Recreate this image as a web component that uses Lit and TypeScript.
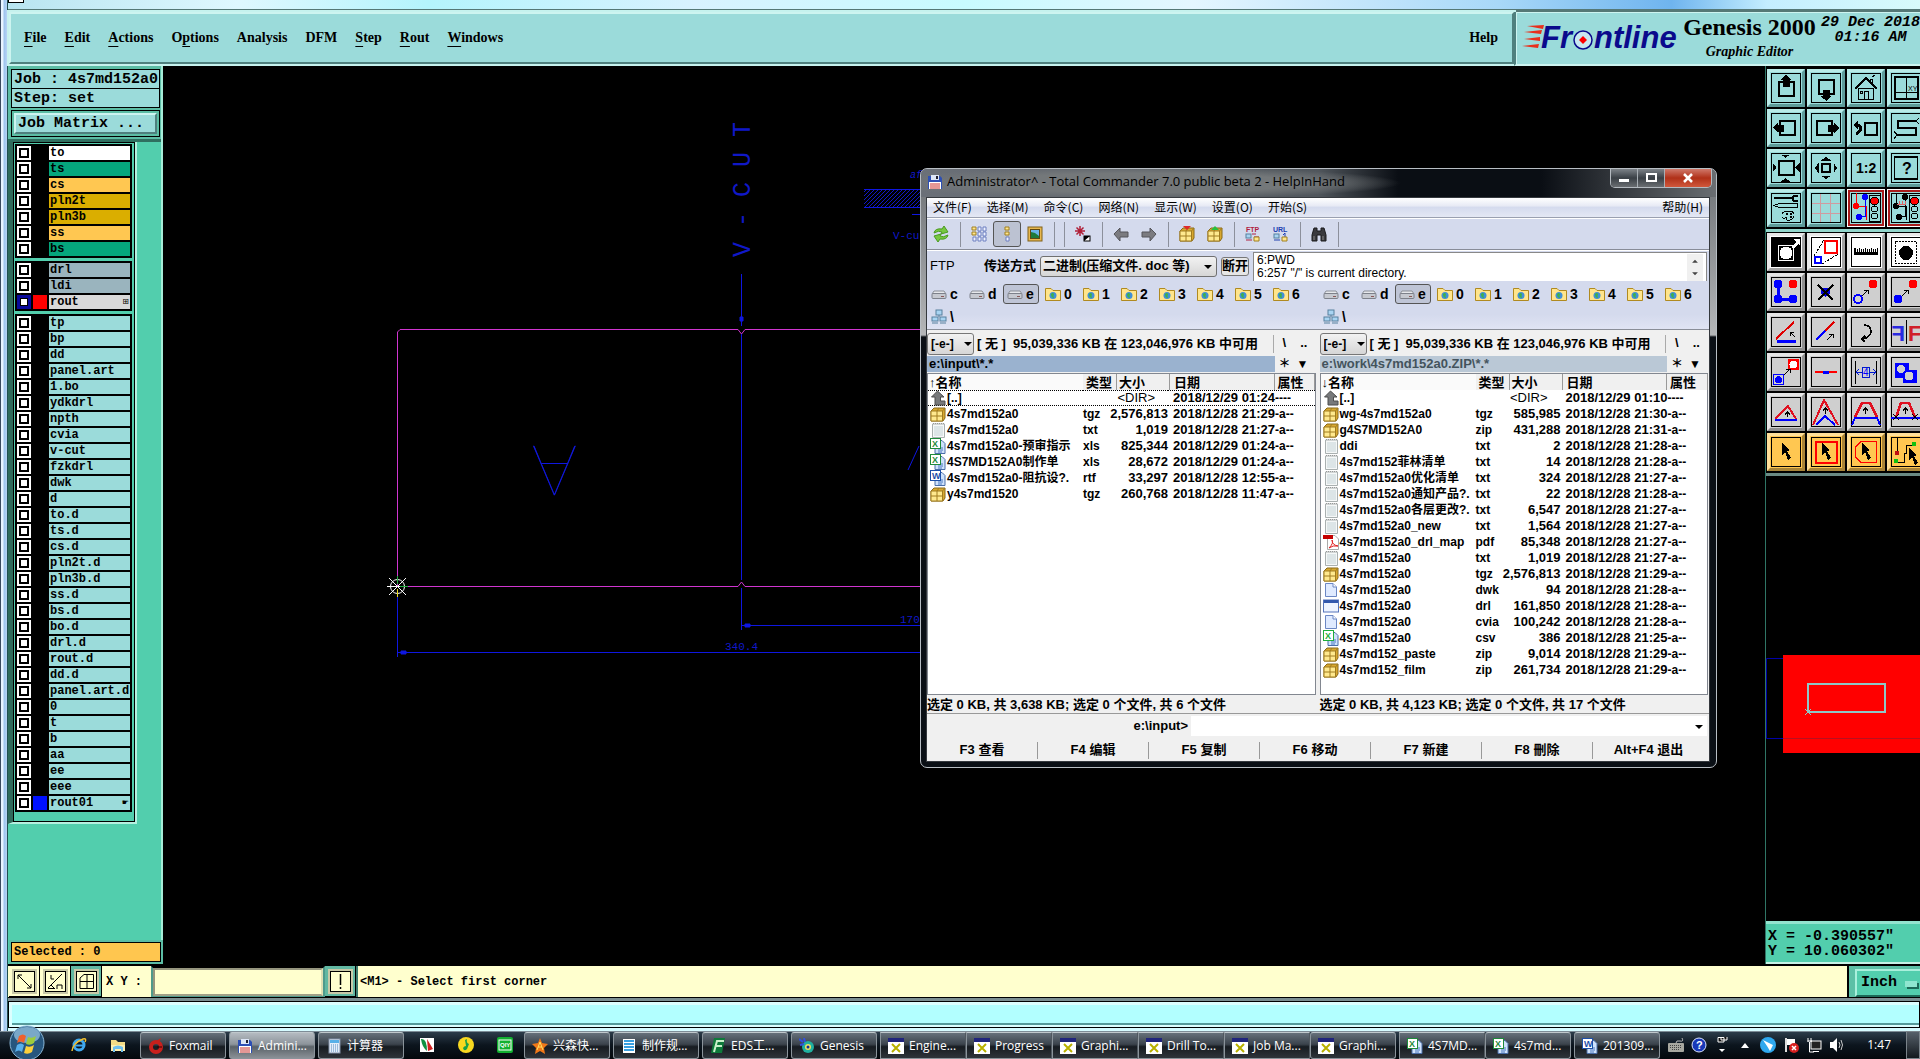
import { LitElement, html, svg, css, TemplateResult, SVGTemplateResult } from "lit";
import { customElement } from "lit/decorators.js";
import { classMap } from "lit/directives/class-map.js";

type Svg = SVGTemplateResult;

/* ---------- data ---------- */

const menus: [string, string, string][] = [
  ["", "F", "ile"], ["", "E", "dit"], ["", "A", "ctions"], ["O", "p", "tions"],
  ["Analysis", "", ""], ["DFM", "", ""], ["", "S", "tep"], ["", "R", "out"], ["", "W", "indows"],
];

interface Layer { name: string; kind: string; swatch?: string; mark?: string; active?: boolean }

const layerGroups: Layer[][] = [
  [
    { name: "to", kind: "white" }, { name: "ts", kind: "green" }, { name: "cs", kind: "amber" },
    { name: "pln2t", kind: "gold" }, { name: "pln3b", kind: "gold" }, { name: "ss", kind: "amber" },
    { name: "bs", kind: "green" },
  ],
  [
    { name: "drl", kind: "slate" }, { name: "ldi", kind: "slate" },
    { name: "rout", kind: "pale", swatch: "red", mark: "⊞", active: true },
  ],
  [
    ..."tp bp dd panel.art 1.bo ydkdrl npth cvia v-cut fzkdrl dwk d to.d ts.d cs.d pln2t.d pln3b.d ss.d bs.d bo.d drl.d rout.d dd.d panel.art.d 0 t b aa ee eee"
      .split(" ").map((name) => ({ name, kind: "aqua" })),
    { name: "rout01", kind: "aqua", swatch: "blue", mark: "☛" },
  ],
];

type Row = [string, string, string, string, string, string];

const leftFiles: Row[] = [
  ["up", "[..]", "", "<DIR>", "2018/12/29 01:24", "----"],
  ["zip", "4s7md152a0", "tgz", "2,576,813", "2018/12/28 21:29", "-a--"],
  ["txt", "4s7md152a0", "txt", "1,019", "2018/12/28 21:27", "-a--"],
  ["xls", "4s7md152a0-预审指示", "xls", "825,344", "2018/12/29 01:24", "-a--"],
  ["xls", "4S7MD152A0制作单", "xls", "28,672", "2018/12/29 01:24", "-a--"],
  ["rtf", "4s7md152a0-阻抗设?.", "rtf", "33,297", "2018/12/28 12:55", "-a--"],
  ["zip", "y4s7md1520", "tgz", "260,768", "2018/12/28 11:47", "-a--"],
];

const rightFiles: Row[] = [
  ["up", "[..]", "", "<DIR>", "2018/12/29 01:10", "----"],
  ["zip", "wg-4s7md152a0", "tgz", "585,985", "2018/12/28 21:30", "-a--"],
  ["zip", "g4S7MD152A0", "zip", "431,288", "2018/12/28 21:31", "-a--"],
  ["txt", "ddi", "txt", "2", "2018/12/28 21:28", "-a--"],
  ["txt", "4s7md152菲林清单", "txt", "14", "2018/12/28 21:28", "-a--"],
  ["txt", "4s7md152a0优化清单", "txt", "324", "2018/12/28 21:27", "-a--"],
  ["txt", "4s7md152a0通知产品?.", "txt", "22", "2018/12/28 21:28", "-a--"],
  ["txt", "4s7md152a0各层更改?.", "txt", "6,547", "2018/12/28 21:27", "-a--"],
  ["txt", "4s7md152a0_new", "txt", "1,564", "2018/12/28 21:27", "-a--"],
  ["pdf", "4s7md152a0_drl_map", "pdf", "85,348", "2018/12/28 21:27", "-a--"],
  ["txt", "4s7md152a0", "txt", "1,019", "2018/12/28 21:27", "-a--"],
  ["zip", "4s7md152a0", "tgz", "2,576,813", "2018/12/28 21:29", "-a--"],
  ["doc", "4s7md152a0", "dwk", "94", "2018/12/28 21:28", "-a--"],
  ["app", "4s7md152a0", "drl", "161,850", "2018/12/28 21:28", "-a--"],
  ["doc", "4s7md152a0", "cvia", "100,242", "2018/12/28 21:28", "-a--"],
  ["csv", "4s7md152a0", "csv", "386", "2018/12/28 21:25", "-a--"],
  ["zip", "4s7md152_paste", "zip", "9,014", "2018/12/28 21:29", "-a--"],
  ["zip", "4s7md152_film", "zip", "261,734", "2018/12/28 21:29", "-a--"],
];

/* ---------- 30x30 editor tool icons ---------- */

const frame = svg`<rect x=".5" y=".5" width="29" height="29" fill="none" stroke="#000"/>`;
const cursor = (x: number, y: number) =>
  svg`<path transform="translate(${x} ${y})" d="M0 0 L8 7 L5 8 L9 15 L6 17 L3 9 L0 12 Z" fill="#000" stroke="none"/>`;
const smallArrow = (x: number, y: number) =>
  svg`<path d="M${x} ${y} l6 -6 m-4 0 h4 v4" fill="none" stroke="#000"/>`;
const lights = (a: string, b: string) => svg`
  <path d="M5 0 V12 M5 13 H15 V27" stroke="${a}" stroke-width="1" fill="none"/>
  <path d="M14 5 V23 H9" stroke="${b}" fill="none"/>
  <circle cx="5" cy="13" r="3" fill="${a}"/><circle cx="14" cy="4" r="3" fill="${b}"/><circle cx="8" cy="24" r="3" fill="${b}"/>
  <rect x="18" y="2" width="11" height="26" fill="none" stroke="#000"/>
  <circle cx="23.500" cy="8" r="4" fill="red" stroke="#000"/>
  <circle cx="23.500" cy="16" r="3" fill="none" stroke="#000"/><circle cx="23.500" cy="23" r="3" fill="none" stroke="#000"/>`;

const viewTools: [string, string, Svg][] = [
  ["Pan up", "", svg`${frame}<rect x="7.500" y="9" width="15" height="14" fill="none" stroke="#000" stroke-width="2"/><path d="M12 14V7H9.500L15 2L20.500 7H18.500V14Z"/>`],
  ["Pan down", "", svg`${frame}<rect x="7.500" y="7" width="15" height="14" fill="none" stroke="#000" stroke-width="2"/><path d="M12 17V23H9.500L15.500 28L21 23H19V17Z"/>`],
  ["Home", "", svg`${frame}<path d="M4 16L15 5L26 16" fill="none" stroke="#000" stroke-width="1.500"/><path d="M7.500 15V26.500H22.500V15ZM13.500 26V18.500H17.500V26M9.500 18.500h2v2h-2zM19.500 10V6.500h2v5M21 4l3-2" fill="none" stroke="#000"/>`],
  ["XY window", "", svg`${frame}<rect x="4" y="4" width="23" height="22" fill="none" stroke="#000" stroke-width="2"/><path d="M15.500 4V26M4 19.500H27" stroke="#000"/><text x="17" y="18" font-size="7">XY</text>`],
  ["Pan left", "", svg`${frame}<rect x="9" y="8" width="15" height="14" fill="none" stroke="#000" stroke-width="2"/><path d="M13 11.500H7V9.500L2 15L7 20V18.500H13Z"/>`],
  ["Pan right", "", svg`${frame}<rect x="6" y="8" width="15" height="14" fill="none" stroke="#000" stroke-width="2"/><path d="M17 11.500H23V9.500L28 15L23 20V18.500H17Z"/>`],
  ["Undo zoom", "", svg`${frame}<rect x="14" y="9.500" width="12" height="12" fill="none" stroke="#000" stroke-width="2"/><path d="M5 12H8Q11 15 8 19L5 21" fill="none" stroke="#000" stroke-width="3"/><path d="M2 12L7 8V16Z"/>`],
  ["Route view", "", svg`${frame}<path d="M25 8H7V15H25V22H6" fill="none" stroke="#000" stroke-width="2"/><path d="M25 8l3-3M25 8l3 3M6 22l-3-4M6 22l-3 4" stroke="#000"/>`],
  ["Zoom out", "", svg`${frame}<rect x="7.500" y="8" width="15" height="14" fill="none" stroke="#000" stroke-width="2"/><path d="M10 1.500H19L14.500 5ZM10 28.500H19L14.500 25ZM1.500 10V19L5.500 14.500ZM28.500 10V19L24.500 14.500Z"/>`],
  ["Zoom in", "", svg`${frame}<rect x="11" y="11" width="8" height="8" fill="none" stroke="#000" stroke-width="2"/><path d="M10 7.500H20L15 4ZM10 22.500H20L15 26ZM7.500 10V20L4 15ZM22.500 10V20L26 15Z"/>`],
  ["Scale 1:2", "", svg`${frame}<text x="5" y="20" font-size="14" font-weight="700">1:2</text>`],
  ["Query", "", svg`${frame}<rect x="3.500" y="4" width="23" height="22" fill="none" stroke="#000" stroke-width="1.500"/><text x="11" y="21" font-size="16" font-weight="700">?</text>`],
  ["Setup", "", svg`${frame}<path d="M3 5H21" stroke="#000" stroke-width="2"/><path d="M27 3H23L21 5L23 8H27" fill="none" stroke="#000" stroke-width="2"/><path d="M3 12.500L8 10.500H26.500V14.500H8Z" fill="none" stroke="#000"/><path d="M11 24q-1-6 6-6q7 0 6 5q-2 5-7 4q0-3-2-2q-2 1-3-1Z" fill="none" stroke="#000"/><circle cx="16" cy="21" r="1"/><circle cx="20" cy="21" r="1"/><circle cx="20" cy="24" r="1"/>`],
  ["Grid", "", svg`${frame}<path d="M9.500 1V29M19.500 1V29M1 10.500H29M1 20.500H29" stroke="#d09aa0"/>`],
  ["Snap to nets", "hot", svg`${frame}${lights("#f00", "#00f")}`],
  ["Snap to pads", "hot", svg`${frame}${lights("#000", "#000")}<path d="M6 11h9M8 8v4M11 8v4M14 8v4" stroke="#d66"/>`],
];

const ring = (cx: number, cy: number, r: number, c: string) => svg`<circle cx="${cx}" cy="${cy}" r="${r}" fill="none" stroke="${c}" stroke-width="2"/>`;
const dot = (cx: number, cy: number, r: number, c: string) => svg`<circle cx="${cx}" cy="${cy}" r="${r}" fill="${c}"/>`;

const editTools: [string, string, Svg][] = [
  ["Mask", "paper", svg`<rect width="30" height="30"/><rect x="7" y="8" width="15" height="15" fill="none" stroke="#fff"/>${dot(15, 16, 6.5, "#fff")}<path d="M20 10L25 5L22 2H29V9L27 7L22 12Z" fill="#fff"/>`],
  ["Magnify", "paper", svg`${frame}<rect x="14" y="4" width="12" height="12" fill="none" stroke="red" stroke-width="2"/><rect x="4" y="20" width="6" height="6" fill="none" stroke="#00f" stroke-width="2"/><path d="M3 19L13 3M11 27L27 17" stroke="#000" stroke-dasharray="2 1"/>`],
  ["Measure", "paper", svg`${frame}<path d="M3 11V18H27V11H26V15H25V12H24V15H23V12H22V15H21V11H20V15H19V12H18V15H17V12H16V15H15V11H14V15H13V12H12V15H11V12H10V15H9V11H8V15H7V12H6V15H5V11Z"/>`],
  ["Select area", "paper", svg`${frame}<rect x="4.500" y="4.500" width="21" height="22" fill="none" stroke="#000" stroke-dasharray="2 1"/>${dot(15, 16, 7, "#000")}`],
  ["Copy net", "", svg`${frame}<path d="M7 7V22H22" fill="none" stroke="#00f" stroke-width="3"/>${dot(7, 7, 4.5, "#00f")}${dot(7, 22, 4.5, "#00f")}${dot(22, 22, 4.5, "#00f")}${dot(22, 7, 4.5, "red")}`],
  ["Delete", "", svg`${frame}${dot(14.5, 15, 4.5, "#00d")}<path d="M7 8L22 23M22 8L7 23" stroke="#000" stroke-width="1.500"/>`],
  ["Move", "", svg`${frame}${dot(22, 7, 4.5, "red")}${ring(7, 22, 4, "#00f")}${smallArrow(11, 19)}`],
  ["Copy", "", svg`${frame}${dot(22, 7, 4.5, "red")}${dot(7, 22, 4.5, "#00f")}${smallArrow(11, 19)}`],
  ["Rotate line", "", svg`${frame}<path d="M5 22L23 5" stroke="#e00000" stroke-width="2"/><path d="M6 24.500H25" stroke="#00f" stroke-width="3"/><path d="M24 20l-5-5m0 4v-4h4" stroke="#000" fill="none"/>`],
  ["Split line", "", svg`${frame}<path d="M5 23L14 14" stroke="#00f" stroke-width="2.500"/><path d="M14 14L23 5" stroke="#e00000" stroke-width="2.500"/>${smallArrow(16, 23)}`],
  ["Rotate", "", svg`${frame}<path d="M13 8Q20 8 20 15Q19 21 11 22M14 19L11 22L14 25" fill="none" stroke="#000" stroke-width="1.500"/>`],
  ["Mirror", "", svg`${frame}<path d="M15.500 3V27" stroke="#000"/><text x="17" y="24" font-size="22" font-weight="700" fill="#d0202a">F</text><text transform="translate(14 24) scale(-1 1)" font-size="22" font-weight="700" fill="#2a2ae0">F</text>`],
  ["Replace", "", svg`${frame}<rect x="17" y="2" width="11" height="11" fill="red"/>${dot(22.5, 7.5, 4, "#fff")}<rect x="2.500" y="17.500" width="10" height="10" fill="none" stroke="#00f"/>${dot(7.5, 22.5, 3.5, "#00f")}${smallArrow(13, 18)}`],
  ["Break", "", svg`${frame}<path d="M4 15H26" stroke="#f00" stroke-width="2.500"/><path d="M12 15H18" stroke="#00f" stroke-width="3"/>`],
  ["Spacing", "", svg`${frame}<path d="M4.500 4V27M25.500 4V27" stroke="#000"/><path d="M5 15.500H11M19 15.500H25M8 12l-3 3l3 3M22 12l3 3l-3 3M11.500 10.500H18.500V20.500H11.500Z" fill="none" stroke="#0018d0"/><text x="12" y="19" font-size="10" fill="#00f">4</text>`],
  ["Merge", "", svg`${frame}<path d="M4 6H18V13H26V26H12V21H4Z" fill="#00f"/>${dot(10, 12, 4, "#cfcfcf")}${dot(18, 19, 4.5, "#cfcfcf")}`],
  ["Triangle", "", svg`${frame}<path d="M4 22L17 9L25 22" fill="none" stroke="#e01020" stroke-width="2"/><path d="M4 22.500H26" stroke="#00f" stroke-width="2"/><path d="M16.500 20V15M14 17.500L16.500 15L19 17.500" fill="none" stroke="#000"/>`],
  ["Peak", "", svg`${frame}<path d="M2 28L13 3L27 28" fill="none" stroke="#e01020" stroke-width="2"/><path d="M5 28L14 19L24 28" fill="none" stroke="#00f" stroke-width="2"/><path d="M14.500 17V11M12 13.500L14.500 11L17 13.500" fill="none" stroke="#000"/>`],
  ["Trapezoid", "", svg`${frame}<path d="M4 20L11 6H19L26 20" fill="none" stroke="#e01020" stroke-width="2.500"/><path d="M1 28L4 20.500H26L29 28" fill="none" stroke="#00f" stroke-width="2"/><path d="M14.500 17V11M12 13.500L14.500 11L17 13.500" fill="none" stroke="#000"/>`],
  ["Trim", "", svg`${frame}<path d="M5 20L10 6H18L24 20" fill="none" stroke="#e01020" stroke-width="2.500"/><path d="M0 20.500H30" stroke="#00f" stroke-width="2"/><path d="M2 17l6 6M8 17l-6 6M21 17l6 6M27 17l-6 6M14.500 17V11M12 13.500L14.500 11L17 13.500" fill="none" stroke="#000"/>`],
  ["Select", "gold", svg`${frame}${cursor(11, 6)}`],
  ["Frame select", "gold", svg`${frame}<rect x="4.500" y="4.500" width="21" height="21" fill="none" stroke="red" stroke-width="2"/>${cursor(11, 6)}`],
  ["Polygon select", "gold", svg`${frame}<path d="M10 4.500H25.500V25.500H10L4.500 20V10Z" fill="none" stroke="red" stroke-width="1.500"/>${cursor(11, 6)}`],
  ["Net select", "gold", svg`${frame}<path d="M6.500 1V16M6 25H13V16H15V8H23" fill="none" stroke="#000"/>${dot(6, 16, 2.5, "#c01010")}${dot(5, 24, 2.5, "#10c010")}${dot(23, 7, 2.5, "#10c010")}${cursor(18, 11)}`],
];

/* ---------- 16x16 icons ---------- */

const box = svg`<path d="M1 5L4 2H15V12L13 15H1Z" fill="#d8a830" stroke="#8a6a18"/><path d="M1 5H12.500V15H1Z" fill="#ffe98e" stroke="#a07c20"/><path d="M7 5V15M1 10H12.500M7 5L9 2M12.500 5L15 2" stroke="#a07c20" fill="none"/>`;
const sheet = (tag: string, c: string) => svg`
  <path d="M5 2.500H12L15 5.500V15.500H5Z" fill="#cfe2fb" stroke="#4a6ea8"/><path d="M8 10H13M8 12H13M8 14H12" stroke="#4a78c0"/>
  <rect x=".5" y=".5" width="10" height="10" fill="#fff" stroke="${c}"/><text x="2" y="9" font-size="9" font-weight="700" fill="${c}">${tag}</text>`;

const icons16: Record<string, Svg> = {
  up: svg`<path d="M7.500 1L14 7H10.500V11H15V15H5V7H1.500Z" fill="#77797b" stroke="#4c4c4c"/>`,
  zip: box,
  txt: svg`<path d="M2.500 2H14.500V15.500H2.500Z" fill="#f6f8f8" stroke="#a9b0b0"/><path d="M4 5H13M4 7H13M4 9H13M4 11H13M4 13H13" stroke="#c3d2d6"/><path d="M3 1.500H14" stroke="#999" stroke-dasharray="1 1"/>`,
  xls: sheet("X", "#1f8a3b"),
  csv: sheet("X", "#1fae3b"),
  rtf: sheet("W", "#1d4fa8"),
  doc: svg`<path d="M2.500 1.500H10L13.500 5V14.500H2.500Z" fill="#dfeaff" stroke="#6b87c4"/><path d="M10 1.500V5H13.500" fill="#fff" stroke="#6b87c4"/>`,
  app: svg`<rect x=".5" y="2" width="15" height="12" fill="#eef4ff" stroke="#5675bb"/><rect x="1" y="2" width="14" height="3" fill="#3359ad"/>`,
  pdf: svg`<path d="M4.500 1.500H12L15.500 5V15.500H4.500Z" fill="#fff" stroke="#aaa"/><rect x="0" y="1" width="10" height="4" fill="#c40000"/><path d="M6 14Q11 9 9 6Q9 11 15 12Q10 11 6 14" fill="none" stroke="#e02020"/>`,
  drive: svg`<path d="M3 5H13L15 8H1Z" fill="#e6e8ec" stroke="#8a8e96"/><rect x="1" y="7.500" width="14" height="5" rx="1" fill="#c6c9d0" stroke="#7d818a"/><path d="M10 10.500h3" stroke="#8a5a5a"/>`,
  folder: svg`<path d="M.5 2.500H6L8 4.500H15.500V14.500H.5Z" fill="#ffe58c" stroke="#b08a20"/><circle cx="8" cy="9.500" r="3.500" fill="#3f8fd8"/><path d="M6 8q2-2 3 0q-1 2 0 4q-3 0-3-4" fill="#3fb04a"/>`,
  net: svg`<rect x="5" y="1" width="6" height="5" fill="#a9d4f2" stroke="#57809e"/><rect x="1" y="8" width="6" height="4" fill="#a9d4f2" stroke="#57809e"/><rect x="9" y="8" width="6" height="4" fill="#a9d4f2" stroke="#57809e"/><path d="M8 6V8M1 14H7M9 14H15" stroke="#57809e"/>`,
  floppy: svg`<path d="M1 2H13L15 4V15H1Z" fill="#2d4fb4"/><rect x="4" y="1" width="8" height="5" fill="#dde6f6"/><rect x="9" y="2" width="2" height="3" fill="#223"/><rect x="2" y="8" width="12" height="7" fill="#fff"/><path d="M3 10H13M3 12H13M3 14H13" stroke="#c8302c"/>`,
  refresh: svg`<path d="M1 7Q2 2 9 3L11 0L15 6L8 8L9 6Q6 4 1 7Z" fill="#77c840" stroke="#4a9a20"/><path d="M15 9Q14 14 7 13L5 16L1 10L8 8L7 10Q10 12 15 9Z" fill="#77c840" stroke="#4a9a20"/>`,
  brief: svg`<path d="M1 1h4v3H1zM1 6h4v3H1z" fill="#ffe58c" stroke="#a08020"/><path d="M7 1h3v4H7zM12 1h3v4h-3zM7 6h3v4H7zM12 6h3v4h-3zM2 11h3v4H2zM7 11h3v4H7zM12 11h3v4h-3z" fill="#eef2ff" stroke="#6d7ec0"/>`,
  full: svg`<path d="M6 1h4v3H6zM6 6h4v3H6z" fill="#ffe58c" stroke="#a08020"/><path d="M7 11h3v4H7z" fill="#eef2ff" stroke="#6d7ec0"/>`,
  picture: svg`<rect x="1" y="1" width="14" height="14" fill="#e8b850" stroke="#806018"/><rect x="3.500" y="3.500" width="9" height="9" fill="#6ab4ea" stroke="#604810"/><path d="M4 12V6L8 7L12 10V12Z" fill="#1d7a3c"/>`,
  select: svg`<path d="M5 0V10M0 5H10M1.500 1.500L8.500 8.500M8.500 1.500L1.500 8.500" stroke="#b02038" stroke-width="1.500"/><rect x="9" y="10" width="6" height="5" fill="#fff" stroke="#000"/><path d="M9 10h6l-6 5Z"/>`,
  back: svg`<path d="M1 8L7 2V6H15V11H7V15Z" fill="#7b7b80" stroke="#55555a"/>`,
  forward: svg`<path d="M15 8L9 2V6H1V11H9V15Z" fill="#7b7b80" stroke="#55555a"/>`,
  pack: svg`${box}<path d="M4 0H12L8 4Z" fill="#e02a2a"/>`,
  unpack: svg`${box}<path d="M4 4H12L8 0Z" fill="#28c040"/>`,
  ftp: svg`<text x="1" y="6" font-size="7" font-weight="700" fill="#b02040">FTP</text><rect x="1" y="8" width="5" height="4" fill="#a9d4f2" stroke="#57809e"/><path d="M1 14H7M7 8h4M9 11h5" stroke="#b02040"/><path d="M9 11h5v4H9z" fill="#ffe58c" stroke="#a08020"/>`,
  url: svg`<text x="0" y="6" font-size="7" font-weight="700" fill="#2040b0">URL</text><rect x="1" y="8" width="5" height="4" fill="#a9d4f2" stroke="#57809e"/><path d="M1 14H7M12 7v4M10 9l2-2" stroke="#2040b0"/><path d="M9 11h5v4H9z" fill="#ffe58c" stroke="#a08020"/>`,
  find: svg`<path d="M3 2H6V5H10V2H13L15 9V15H10V9H6V15H1V9Z" fill="#3a3a3e" stroke="#1a1a1c"/><path d="M3 10V14M12 10V14" stroke="#888"/>`,
  ie: svg`<circle cx="8" cy="8" r="5" fill="none" stroke="#3fa8ee" stroke-width="3"/><path d="M4 8.500H13" stroke="#3fa8ee" stroke-width="2"/><path d="M1 14Q2 6 12 2Q16 1 14 5" fill="none" stroke="#f2c02e" stroke-width="1.500"/>`,
  explorer: svg`<path d="M1 3H6L8 5H15V13H1Z" fill="#f5dc86"/><path d="M1 8H15V14H1Z" fill="#fff0b0"/><path d="M3 15V10Q8 7 13 10V15H11V12H5V15Z" fill="#6fc0ee"/>`,
  fox: svg`<circle cx="8" cy="9" r="5" fill="none" stroke="#c8201c" stroke-width="4"/><path d="M4 6L13 0L11 5Z" fill="#c8201c"/><path d="M9 9h5" stroke="#300"/>`,
  calc: svg`<rect x="3" y="1" width="11" height="14" fill="#e4eefa" stroke="#8090a8"/><rect x="4" y="2" width="9" height="3" fill="#58b0e8"/><path d="M5 7H12M5 9H12M5 11H12M5 13H12" stroke="#58b" stroke-dasharray="1 1"/>`,
  viewer: svg`<path d="M1 1H15V15H1Z" fill="#fff"/><path d="M2 2Q8 1 8 14Q3 10 2 2Z" fill="#109040"/><path d="M8 2L14 12L9 14Z" fill="#d02020"/>`,
  music: svg`<circle cx="8" cy="8" r="8" fill="#f8d820"/><path d="M9 2Q8 6 11 7L9 12Q6 15 5 11Q6 9 8 9L7 3Z" fill="#18a048"/>`,
  iqiyi: svg`<rect width="16" height="16" rx="2" fill="#12b030"/><rect x="2" y="3" width="12" height="10" fill="none" stroke="#fff"/><text x="3" y="10" font-size="6" font-weight="700" fill="#fff">QIY</text>`,
  star: svg`<path d="M8 0L10 5L16 6L12 10L13 16L8 13L3 16L4 10L0 6L6 5Z" fill="#f07818"/><path d="M5 12L8 4L11 12M6 9H10" fill="none" stroke="#ffe060"/>`,
  list: svg`<rect x="2" y="1" width="12" height="14" fill="#fff"/><path d="M3 3H13M3 6H13M3 9H13M3 12H13" stroke="#3aa0e0" stroke-width="2"/>`,
  eds: svg`<path d="M4 0H15L12 15H1Z" fill="#0e7a3a"/><path d="M4 14L7 3H14M6 8H12" fill="none" stroke="#c8f0c8" stroke-width="2"/>`,
  genesis: svg`<circle cx="9" cy="9" r="6" fill="#20b0a0"/><circle cx="9" cy="9" r="3" fill="#f0e060"/><circle cx="9" cy="9" r="1.500" fill="#1030a0"/><path d="M0 1l4 3M5 0l1 4M1 7l4-1" stroke="#3050e0" stroke-width="2"/>`,
  xwin: svg`<rect width="16" height="16" fill="#fff"/><rect width="16" height="4" fill="#20247c"/><path d="M4 6L12 14M12 6L4 14" stroke="#b8b000" stroke-width="2"/>`,
  keyboard: svg`<path d="M8 6Q8 3 12 4T14 1" fill="none" stroke="#bbb"/><rect x="0" y="6" width="16" height="9" rx="1" fill="#a8a8a0"/><path d="M2 8.500H14M2 10.500H14M4 12.500H12" stroke="#444" stroke-dasharray="1 1"/>`,
  help: svg`<circle cx="8" cy="8" r="7" fill="#1838b8" stroke="#dde6ff"/><text x="5" y="12" font-size="11" font-weight="700" fill="#fff">?</text>`,
  restore: svg`<path d="M7 -1.500H13V3H7ZM4 .5H10V5H4Z" fill="#111" stroke="#fff"/><path d="M5 12H11L8 15Z" fill="#fff"/>`,
  tri: svg`<path d="M4 11H12L8 6Z" fill="#fff"/>`,
  bird: svg`<circle cx="8" cy="8" r="8" fill="#2fa8ee"/><path d="M3 3L13 8L10 14L7 9Z" fill="#fff"/>`,
  flag: svg`<path d="M3 1V15" stroke="#ddd" stroke-width="2"/><path d="M4 2H12V8H4Z" fill="#fff"/><circle cx="11" cy="11" r="5" fill="#d82020"/><path d="M9 9l4 4M13 9l-4 4" stroke="#fff" stroke-width="1.500"/>`,
  lan: svg`<rect x="5" y="4" width="10" height="8" fill="#222" stroke="#fff"/><path d="M7 14.500H13M2 1V5M5 1V5M1.500 4H6M3.500 5V15H8" stroke="#fff" fill="none"/>`,
  sound: svg`<path d="M1 5H4L8 1V15L4 11H1Z" fill="#fff"/><path d="M10 5Q12 8 10 11M12 3Q15 8 12 13" fill="none" stroke="#ccc"/>`,
};

const icon = (name: string, cls = "i16") =>
  html`<svg class=${cls} viewBox="0 0 16 16" aria-hidden="true">${icons16[name]}</svg>`;

const tcTools = ["refresh", "|", "brief", "full", "picture", "|", "|", "select", "|", "back", "forward", "|", "pack", "unpack", "|", "ftp", "url", "|", "find", "|"];

/* ---------- root ---------- */

@customElement("app-root")
export class AppRoot extends LitElement {
  static styles = css`
    :host { display: block; --aqua: #9bdbda; --teal: #52cead; --lit: #cdf4f0; --dim: #4f807e; color: #000; }
    * { box-sizing: border-box; }
    button, input, select, textarea { font: inherit; color: inherit; margin: 0; padding: 0; border: 0; border-radius: 0; background: none; }
    select, input { appearance: none; }
    a { color: inherit; text-decoration: none; }
    svg { display: block; flex: none; }
    svg text { font-family: "Liberation Sans", sans-serif; }
    .screen { display: flex; flex-direction: column; min-height: 100vh; background: #000; overflow: hidden; }
    .desk { display: flex; flex: 1; }
    .edge { width: 8px; flex: none; background: linear-gradient(90deg, #3a4a60 0 1px, #e8f4ff 1px 3px, #9cc4ee 4px, #b8d4f4 7px, #1f4f50 7px 8px); }
    .genesis { flex: 1; min-width: 0; display: flex; flex-direction: column; }
    .cap { height: 9px; background: linear-gradient(90deg, #b8e4f0, #dff8ff 12%, #b4f4fc 22%, #d8f2ff 36%, #c8fbff 50%, #e4f6ff 62%, #a8d8f8 78%, #6fb4ee 87%, #c4eeff 92%, #d8fbfb); }
    .cap span { display: block; width: 16px; height: 3px; background: #fff; border: 1px solid #000; border-top: 0; }

    .head { display: flex; height: 57px; border-top: 3px solid #557876; font: 700 14px/18px "Liberation Serif", serif; }
    .menubar { flex: 1; display: flex; align-items: center; gap: 18px; padding: 0 14px 0 13px; background: var(--aqua); border: 2px solid var(--lit); border-right-color: var(--dim); border-bottom-color: var(--dim); margin: 0 0 2px 1px; outline: 2px solid #c6f2ee; outline-offset: 0; }
    .menubar u { text-underline-offset: 4px; }
    .menubar .help { margin-left: auto; }
    .brand { width: 406px; overflow: hidden; display: flex; background: var(--aqua); border-left: 2px solid var(--dim); border-bottom: 2px solid var(--lit); box-shadow: inset 1px 1px var(--lit); padding: 2px 0 0 6px; z-index: 1; white-space: nowrap; }
    .logo { width: 160px; height: 48px; }
    .logo text { font: italic 700 31px "Liberation Sans", sans-serif; }
    .product { width: 142px; text-align: center; font-size: 24px; line-height: 26px; }
    .product em { display: block; font-size: 14px; line-height: 24px; }
    .clock { font: italic 700 15px/15px "Liberation Mono", monospace; text-align: center; padding: 1px 0 0 4px; }
    .clock span { display: block; }

    .mid { flex: 1; display: flex; }
    .left { width: 155px; flex: none; display: flex; flex-direction: column; background: var(--teal); border-right: 2px solid #a6ecd8; font-family: "Liberation Mono", monospace; }
    .jobs { background: #5cbda5; padding: 3px 1px 2px 3px; font-size: 15px; font-weight: 700; line-height: 17px; border-bottom: 3px solid #2f6f60; }
    .jobs div { border: 1px solid #000; background: var(--aqua); padding: 1px 2px; height: 20px; white-space: pre; }
    .jobs div + div { margin-top: -1px; }
    .jobs .matrix { background: #5cbda5; margin-top: 2px; height: 27px; padding: 2px; }
    .matrix button { width: 100%; height: 21px; text-align: left; background: var(--aqua); border: 2px solid var(--lit); border-right-color: var(--dim); border-bottom-color: var(--dim); padding-left: 2px; line-height: 17px; }
    .listwrap { border-left: 5px solid #2f6b5c; margin-right: 24px; border-right: 2px solid #b5f0e0; border-bottom: 2px solid #b5f0e0; }
    .layers { border: 1px solid #000; padding: 1px 2px 9px 1px; display: flex; flex-direction: column; gap: 3px; }
    .group { background: #000; padding: 2px; display: flex; flex-direction: column; gap: 2px; }
    .layer { display: flex; gap: 2px; height: 14px; font-size: 12px; font-weight: 700; line-height: 14px; }
    .layer input { width: 14px; height: 14px; background: #fff; box-shadow: inset 0 0 0 2px #fff, inset 0 0 0 4px #000; flex: none; }
    .layer input.active { box-shadow: inset 0 0 0 3px #0a0a9c, inset 0 0 0 4px #000; }
    .swatch { width: 14px; flex: none; }
    .red { background: #f00; } .blue { background: #0010ff; }
    .tag { flex: 1; padding-left: 1px; display: flex; justify-content: space-between; }
    .tag i { font: 8px/14px "DejaVu Sans", sans-serif; padding-right: 1px; }
    .white { background: #fff; } .green { background: #05a67d; } .amber { background: #ffc751; } .gold { background: #daae00; }
    .slate { background: #9ab4be; } .pale { background: #d9d9d9; } .aqua { background: var(--aqua); }
    .selected { margin: auto 0 2px 3px; height: 20px; border: 1px solid #000; outline: 2px solid #5cbda5; background: #ffc64f; font-size: 12px; font-weight: 700; line-height: 18px; padding-left: 2px; }

    .canvas { flex: 1; position: relative; background: #000; overflow: hidden; }
    .drawing { width: 100%; height: 100%; position: absolute; inset: 0; }
    .drawing text { font-family: "Liberation Mono", monospace; fill: #1018c8; stroke: none; }
    .drawing .thin { font-family: Lato, sans-serif; font-weight: 100; fill: #1a22ff; stroke: #0f17e0; stroke-width: .5px; }

    .right { width: 155px; flex: none; display: flex; flex-direction: column; border-left: 1px solid #2f7565; overflow: hidden; }
    .tools { display: grid; grid-template-columns: repeat(4, 38px); gap: 2px; padding: 3px 0 2px 1px; background: #000; }
    .tools + .tools { border-top: 3px solid #93d6cc; padding-top: 1px; border-bottom: 3px solid #6a8a84; }
    .tools button { width: 38px; height: 38px; padding: 1px; border: 3px solid #b9ebe8; border-right-color: #5f9c9a; border-bottom-color: #5f9c9a; background: var(--aqua); }
    .tools svg { width: 30px; height: 30px; shape-rendering: crispEdges; }
    .edit button { background: #cfcfcf; border-color: #e6e6e6 #909090 #909090 #e6e6e6; }
    .edit .paper { background: #fff; border-color: #e8e8e8 #a4a4a4 #a4a4a4 #e8e8e8; }
    .edit .gold { background: #ffc751; border-color: #ffe09a #a88438 #a88438 #ffe09a; }
    .tools .hot { border-color: #a81c1c; outline: 1px solid #fff; outline-offset: -1px; }
    .preview { flex: 1; min-height: 100px; width: 100%; }
    .coords { height: 43px; border-top: 3px solid #93e4cf; background: var(--teal); border-bottom: 2px solid #c6f2e6; font: 700 15px/15px "Liberation Mono", monospace; padding: 5px 2px; white-space: pre; }

    .status { display: flex; height: 34px; border-top: 2px solid #000; border-bottom: 1px solid #000; background: #ffffce; font: 700 12px/32px "Liberation Mono", monospace; white-space: pre; padding-left: 1px; }
    .status > button { width: 31px; border: 1px solid #000; border-width: 0 1px 1px 0; background: #ffffce; padding: 1px; flex: none; }
    .status > button.on { background: #62b8a2; }
    .status button svg { width: 25px; height: 25px; margin: auto; background: #ffffce; border: 2px solid #c9c9a8; }
    .status label { padding: 0 9px 0 4px; }
    .entry { width: 174px; border: 2px solid #4f9a8c; border-top-color: #000; }
    .entry input { display: block; width: 100%; height: 28px; border: 2px solid #96967e; border-right-color: #e0e0b4; border-bottom-color: #a0a088; padding-left: 4px; }
    .msg { flex: 1; padding-left: 2px; border-left: 2px solid #3c7a6c; }
    .unit { width: 73px; background: #5cc0a6; border-left: 2px solid #000; padding: 1px 0 1px 6px; overflow: hidden; }
    .unit select { width: 80px; height: 28px; font: 700 15px "Liberation Mono", monospace; background: linear-gradient(#8fe6d0 0 0) 48px 10px/12px 6px no-repeat, linear-gradient(#1c6a58 0 0) 50px 12px/12px 6px no-repeat, var(--teal); border: 2px solid #a9f0dc; border-bottom-color: #1c6a58; padding-left: 4px; }
    .cmd { height: 33px; background: #d6fbff; border-top: 3px solid #7c8f92; padding: 0; }
    .cmd input { display: block; width: 100%; height: 27px; background: #b2ffff; border: 1px solid #000; box-shadow: inset 3px 3px #dcffff, inset 0 -2px #dcffff, inset 0 -4px #559a9a; padding: 0 8px; }

    /* taskbar */
    .taskbar { display: flex; height: 28px; flex: none; align-items: stretch; color: #fff; font: 12px/26px "Open Sans", "Noto Sans CJK SC", sans-serif; background: linear-gradient(#7d8c96 0 1px, #2c3c4a 1px, #0c151e 50%, #04080c); padding-left: 9px; white-space: nowrap; }
    .orb { width: 36px; height: 36px; margin-top: -6px; z-index: 2; flex: none; }
    .orb svg { width: 36px; height: 36px; }
    .ql { width: 39px; flex: none; display: flex; align-items: center; justify-content: center; }
    .start { display: flex; flex: none; padding: 0 3px 0 14px; }
    .task { width: 86px; flex: none; margin: 1px 3px 0 0; padding-left: 7px; display: flex; align-items: center; gap: 5px; border: 1px solid #8a939a; border-top-color: #c0c8cc; border-radius: 3px; background: linear-gradient(#66717b, #3b434c 45%, #171c21 55%, #2e343a); text-align: left; overflow: hidden; }
    .task.on { background: linear-gradient(#b4bac0, #8c949b 45%, #5a6268 55%, #8a9096); }
    .task.joined { margin-right: 0; border-right-color: #50585f; border-radius: 0; }
    .tray { margin-left: auto; display: flex; align-items: center; gap: 7px; }
    .tray .wide { margin-left: 15px; }
    .peek { width: 14px; margin-left: 8px; align-self: stretch; border: 1px solid #7a838a; background: linear-gradient(#56606a, #14191e); }
    .i16 { width: 16px; height: 16px; }

    /* file manager window */
    .tc { position: absolute; left: 757px; top: 102px; width: 797px; border: 1px solid #b8bec4; border-radius: 7px; padding: 0 6px 5px 5px; background: linear-gradient(#6c7074, #b4b6b8 166px, #0a0f15 168px, #0a0f15); font: 700 13px/16px "Liberation Sans", "Noto Sans CJK SC", sans-serif; }
    .title { margin: 0 -6px 0 -5px; height: 28px; padding: 0 8px 0 6px; display: flex; gap: 4px; border-radius: 6px 6px 0 0; background: radial-gradient(260px 16px at 220px 14px, #74787a 60%, transparent), linear-gradient(90deg, #6b7078, #50565c 50%, #0a0e14 60%, #0a0e14 78%, #6a6e72); font: 13px/25px "Open Sans", sans-serif; }
    .title svg { margin-top: 5px; }
    .title h1 { font: inherit; margin: 0; flex: 1; white-space: nowrap; }
    .wbtns { display: flex; height: 19px; border: 1px solid #b4bac0; border-top: 0; border-radius: 0 0 5px 5px; overflow: hidden; margin-right: -4px; }
    .wbtns button { width: 27px; background: linear-gradient(#7c8288, #3a4046 50%, #6a6e72); border-right: 1px solid #a8aeb4; }
    .wbtns button:last-child { width: 46px; border: 0; background: linear-gradient(#d0786a, #b03018 50%, #d0583c); }
    .wbtns svg { width: 16px; height: 12px; margin: 0 auto; }
    .wbtns .min { margin-top: 4px; }
    .body { background: #f0f0f0; border: 1px solid #35393e; }
    .tcmenu { display: flex; gap: 15px; height: 20px; padding: 0 6px; font: 12px/17px "Noto Sans CJK SC", sans-serif; background: linear-gradient(#fff, #e8ebf5 40%, #d5dbee 50%, #e4e8f4); border-bottom: 1px solid #9aa0b0; }
    .tcmenu .end { margin-left: auto; }
    .bar { background: #d4daed; }
    .icons { display: flex; align-items: center; height: 32px; border-top: 1px solid #fff; border-bottom: 1px solid #888c98; }
    .icons button { width: 28px; height: 26px; display: flex; align-items: center; justify-content: center; }
    .icons button.on { border: 1px solid #555; border-radius: 3px; background: #bcc2d2; }
    .icons span { width: 1px; height: 25px; background: #8c909c; margin: 0 4px 0 5px; }
    .ftp { display: flex; height: 31px; padding-left: 3px; align-items: center; border-top: 1px solid #fff; }
    .ftp .lbl { font-weight: 400; width: 54px; }
    .ftp select { width: 177px; height: 21px; margin: 0 4px; border: 1px solid #707070; border-radius: 3px; padding-left: 2px; }
    select.drop { background: linear-gradient(#f2f2f2, #d6d6d6); }
    .pick { position: relative; display: flex; }
    .pick::after { content: ""; position: absolute; right: 9px; top: 9px; border: 4px solid transparent; border-top-color: #000; border-bottom: 0; pointer-events: none; }
    .pick.tight::after { right: 5px; }
    .ftp button { width: 28px; height: 19px; border: 1px solid #777; border-radius: 3px; background: #e6e6e6; line-height: 16px; }
    .log { flex: 1; height: 29px; margin: 0 2px 0 4px; background: #fff; border: 1px solid #888; border-bottom: 0; padding: 1px 3px 0; font-weight: 400; font-size: 12px; line-height: 13px; display: flex; justify-content: space-between; white-space: pre; }
    .log svg { width: 16px; height: 27px; background: #f0f0f0; }
    .drives { display: grid; grid-template-columns: 392px 1fr; padding: 3px 0 0; height: 49px; border-bottom: 1px solid #8a8e98; background: linear-gradient(#d4daed 70%, #e0e4f4); font-size: 14px; }
    .dr { display: flex; flex-wrap: wrap; gap: 3px 2px; align-content: flex-start; }
    .dr button { width: 36px; height: 20px; display: flex; align-items: center; gap: 3px; padding-left: 3px; border: 1px solid transparent; }
    .dr button.on { border-color: #555; border-radius: 3px; background: #bfc5d6; }
    .dr .root { width: 100%; }
    .panes { display: flex; gap: 4px; padding: 2px 1px 0 0; }
    .pane { flex: 1; min-width: 0; }
    .info { display: flex; height: 23px; align-items: center; white-space: pre; }
    .info select { width: 47px; height: 22px; border: 1px solid #777; border-radius: 3px; margin-right: 3px; padding-left: 3px; font-size: 12px; }
    .info .nav { margin-left: auto; width: 43px; border-left: 1px solid #aaa; padding-left: 9px; height: 18px; display: flex; gap: 14px; }
    .path { display: flex; height: 16px; margin: 1px 0 1px; }
    .path b { flex: 1; background: #9ab2cf; padding-left: 2px; }
    .path.dimmed b { background: #bac8d6; color: #44535c; }
    .path span { width: 41px; padding-left: 4px; display: flex; gap: 6px; font-size: 12px; }
    .list { height: 322px; background: #fff; border: 1px solid #828790; }
    table { border-collapse: collapse; table-layout: fixed; width: 387px; }
    th, td { padding: 0; height: 16px; line-height: 16px; white-space: nowrap; font-weight: 700; text-align: left; }
    th { background: #f0f0f0; height: 16px; line-height: 15px; }
    th:first-child { background: #fafafa; padding-left: 1px; }
    th.t { padding-left: 3px; }
    th.s { background: linear-gradient(90deg, transparent 7px, #999 7px 8px, transparent 8px) #f0f0f0; padding-left: 10px; }
    th.d { background: linear-gradient(90deg, transparent 1px, #999 1px 2px, transparent 2px) #f0f0f0; padding-left: 6px; }
    th.a { border-left: 1px solid #999; border-right: 1px solid #999; padding-left: 3px; }
    .c1 { width: 155px; } .c2 { width: 26px; } .c3 { width: 59px; } .c4 { width: 106px; }
    td.n { font-size: 12px; }
    .nm { display: flex; gap: 1px; padding-left: 2px; height: 16px; }
    td.e { font-size: 12px; } td.z { text-align: right; } td.w { padding-left: 5px; } td.x { padding-left: 1px; font-size: 12px; }
    tr.focus td { outline: 0; background: linear-gradient(90deg, #000 50%, transparent 50%) 0 0/2px 1px repeat-x, linear-gradient(90deg, #000 50%, transparent 50%) 0 100%/2px 1px repeat-x; }
    .up td.z { font-weight: 400; padding-right: 13px; }
    .sum { height: 18px; padding: 2px 0 0 0; white-space: pre; font-size: 13px; line-height: 15px; }
    .line { display: flex; border-top: 1px solid #999; height: 24px; padding: 2px; align-items: center; }
    .line label { width: 262px; text-align: right; padding-right: 3px; }
    .line .pick { flex: 1; }
    .line input { flex: 1; background: #fff; height: 20px; }
    .pick.cmdline::after { right: 4px; }
    .keys { display: flex; height: 24px; padding-top: 2px; align-items: center; }
    .keys button { width: 111px; height: 17px; border-right: 1px solid #999; }
    .keys button:last-child { border: 0; }
  `;

  private layer(l: Layer) {
    const id = "layer-" + l.name.replace(/\./g, "_");
    return html`<div class="layer">
      <input type="checkbox" id=${id} class=${classMap({ active: !!l.active })}>
      <span class="swatch ${l.swatch ?? ""}"></span>
      <label class="tag ${l.kind}" for=${id}>${l.name}${l.mark ? html`<i>${l.mark}</i>` : ""}</label>
    </div>`;
  }

  private tools(list: [string, string, Svg][], cls: string) {
    return html`<div class="tools ${cls}">${list.map(([name, kind, art]) => html`
      <button class=${kind} aria-label=${name}><svg viewBox="0 0 30 30">${art}</svg></button>`)}</div>`;
  }

  private drawing() {
    return html`<svg class="drawing" role="img" aria-label="Panel drawing">
      <defs><pattern id="hatch" width="4" height="4" patternUnits="userSpaceOnUse"><path d="M0 4L4 0" stroke="#1018c8"/></pattern></defs>
      <g transform="translate(-163 -66)" fill="none" stroke="#0f17e0" stroke-width="1">
        <path d="M741.500 274V326M741.500 334V580M741.500 588V630M397.500 597V657M397 652.500H1000M742 625.500H1000"/>
        <path d="M740 317h3v4h-3zM401 651h5v3h-5zM745 624h5v3h-5z" fill="#0f17e0"/>
        <path d="M864 189.500H1000M864 207.500H1000M912 214.500H1000M908 470L919 446"/>
        <rect x="864" y="190" width="80" height="17" fill="url(#hatch)" stroke="none"/>
        <path d="M1000 329.500H745L741.500 334L738 329.500H400L397.500 332V586.500H738L741.500 582L745 586.500H1000" stroke="#d035d0"/>
        <text transform="translate(750 257) rotate(-90)" font-size="25">V - C U T</text>
        <text class="thin" transform="translate(577 446) rotate(180)" font-size="71">A</text>
        <text x="893" y="239" font-size="11">V-cu</text><text x="910" y="178" font-size="10" font-style="italic">af</text>
        <text x="900" y="623" font-size="11">170</text><text x="725" y="650" font-size="11">340.4</text>
        <g stroke="#fff"><circle cx="397.500" cy="586.500" r="7"/><path d="M387 586.500H408M389 578L406 595M406 578L389 595"/></g>
        <path d="M397.500 576V584M400 586.500H408" stroke="#20b040"/><path d="M397.500 589V597" stroke="#e8d820"/>
      </g>
    </svg>`;
  }

  private pane(path: string, rows: Row[], sum: string, dimmed: boolean) {
    return html`<section class="pane">
      <div class="info">
        <span class="pick tight"><select class="drop" aria-label="Drive"><option>[-e-]</option></select></span><span>[ 无 ]  95,039,336 KB 在 123,046,976 KB 中可用</span>
        <span class="nav"><a href="#root">\\</a><a href="#parent">..</a></span>
      </div>
      <div class="path ${dimmed ? "dimmed" : ""}"><b>${path}</b><span>＊<i>▼</i></span></div>
      <div class="list"><table>
        <colgroup><col class="c1"><col class="c2"><col class="c3"><col class="c4"><col></colgroup>
        <thead><tr><th>${dimmed ? "↓" : "↑"}名称</th><th class="t">类型</th><th class="s">大小</th><th class="d">日期</th><th class="a">属性</th></tr></thead>
        <tbody>${rows.map(([ic, n, e, s, d, a], i) => html`<tr class=${classMap({ up: i === 0, focus: i === 0 && !dimmed })}>
          <td class="n"><div class="nm">${icon(ic)}<span>${n}</span></div></td><td class="e">${e}</td><td class="z">${s}</td><td class="w">${d}</td><td class="x">${a}</td></tr>`)}</tbody>
      </table></div>
      <div class="sum">${sum}</div>
    </section>`;
  }

  private driveRow() {
    return html`<div class="dr">
      ${["c", "d", "e"].map((d) => html`<button class=${d === "e" ? "on" : ""}>${icon("drive")}${d}</button>`)}
      ${[0, 1, 2, 3, 4, 5, 6].map((d) => html`<button>${icon("folder")}${d}</button>`)}
      <button class="root">${icon("net")}\\</button></div>`;
  }

  private commander() {
    return html`<section class="tc" aria-label="Total Commander">
      <div class="title">${icon("floppy")}<h1>Administrator^ - Total Commander 7.0 public beta 2 - HelpInHand</h1>
        <div class="wbtns">
          <button aria-label="Minimize"><svg class="min" viewBox="0 0 16 12"><path d="M3 5h10v3H3z" fill="#fff"/></svg></button>
          <button aria-label="Maximize"><svg viewBox="0 0 16 12"><path d="M4 2h9v7H4z" fill="none" stroke="#fff" stroke-width="2"/></svg></button>
          <button aria-label="Close"><svg viewBox="0 0 16 12"><path d="M4 2l8 8M12 2l-8 8" stroke="#fff" stroke-width="2.500"/></svg></button>
        </div></div>
      <div class="body">
        <nav class="tcmenu">${["文件(F)", "选择(M)", "命令(C)", "网络(N)", "显示(W)", "设置(O)", "开始(S)"].map((m) => html`<a href="#menu">${m}</a>`)}<a class="end" href="#help">帮助(H)</a></nav>
        <div class="bar icons">${tcTools.map((t) => t === "|" ? html`<span></span>` : html`<button class=${t === "full" ? "on" : ""} aria-label=${t}>${icon(t)}</button>`)}</div>
        <div class="bar ftp"><span class="lbl">FTP</span><label for="mode">传送方式</label>
          <span class="pick"><select id="mode" class="drop"><option>二进制(压缩文件. doc 等)</option></select></span><button>断开</button>
          <div class="log"><span>6:PWD
6:257 "/" is current directory.</span><svg viewBox="0 0 16 28"><path d="M5 9H11L8 6ZM5 19H11L8 22Z" fill="#444"/></svg></div></div>
        <div class="drives">${this.driveRow()}${this.driveRow()}</div>
        <div class="panes">
          ${this.pane("e:\\input\\*.*", leftFiles, "选定 0 KB, 共 3,638 KB; 选定 0 个文件, 共 6 个文件", false)}
          ${this.pane("e:\\work\\4s7md152a0.ZIP\\*.*", rightFiles, "选定 0 KB, 共 4,123 KB; 选定 0 个文件, 共 17 个文件", true)}
        </div>
        <div class="line"><label for="cl">e:\\input&gt;</label><span class="pick cmdline"><input id="cl" type="text"></span></div>
        <div class="keys">${["F3 查看", "F4 编辑", "F5 复制", "F6 移动", "F7 新建", "F8 刪除", "Alt+F4 退出"].map((k) => html`<button>${k}</button>`)}</div>
      </div>
    </section>`;
  }

  private task(ic: string, label: string, cls = ""): TemplateResult {
    return html`<button class="task ${cls}">${icon(ic)}${label}</button>`;
  }

  render() {
    return html`<div class="screen">
      <div class="desk"><div class="edge"></div>
        <div class="genesis">
          <div class="cap"><span></span></div>
          <header class="head">
            <nav class="menubar">${menus.map(([a, u, b]) => html`<a href="#menu">${a}<u>${u}</u>${b}</a>`)}<a class="help" href="#help">Help</a></nav>
            <div class="brand">
              <svg class="logo" viewBox="0 0 160 48" role="img" aria-label="Frontline">
                <path d="M5 12L22 11L21 15ZM2 18L20 16L19 20ZM2 25L18 23L18 27ZM0 32L17 30L16 34Z" fill="#e8301c"/>
                <text x="19" y="34" fill="#0a0a8c">Fr</text><text x="72" y="34" fill="#0a0a8c">ntline</text>
                <circle cx="61" cy="26" r="9" fill="#c8e8f0" stroke="#0a0a8c" stroke-width="1.500"/><path d="M61 22L65 26L61 30L57 26Z" fill="#f00"/>
              </svg>
              <div class="product">Genesis 2000<em>Graphic Editor</em></div>
              <div class="clock"><span>29 Dec 2018</span><span>01:16 AM</span></div>
            </div>
          </header>
          <div class="mid">
            <aside class="left">
              <div class="jobs"><div>Job : 4s7md152a0</div><div>Step: set</div><div class="matrix"><button>Job Matrix ...</button></div></div>
              <div class="listwrap"><div class="layers">${layerGroups.map((g) => html`<div class="group">${g.map((l) => this.layer(l))}</div>`)}</div></div>
              <div class="selected">Selected : 0</div>
            </aside>
            <main class="canvas">${this.drawing()}${this.commander()}</main>
            <aside class="right">
              ${this.tools(viewTools, "")}${this.tools(editTools, "edit")}
              <svg class="preview" role="img" aria-label="Overview">
                <path d="M17 182.500H.5V262.500H17" fill="none" stroke="#0000a8"/>
                <rect x="17" y="179" width="140" height="98" fill="#f00"/>
                <path d="M17 262.500H154" fill="none" stroke="#b81020"/>
                <rect x="42" y="208" width="77" height="28" fill="none" stroke="#8fc8c8" stroke-width="2"/>
                <path d="M39 233l6 6M45 233l-6 6" stroke="#8fc8c8"/>
              </svg>
              <div class="coords">X = -0.390557"
Y = 10.060302"</div>
            </aside>
          </div>
          <div class="status">
            <button aria-label="Resize"><svg viewBox="0 0 21 21"><rect x=".5" y=".5" width="20" height="20" fill="none" stroke="#000"/><path d="M4 8V4H8M4 4L17 17M17 13V17H13" fill="none" stroke="#000"/></svg></button>
            <button aria-label="Angle"><svg viewBox="0 0 21 21"><rect x=".5" y=".5" width="20" height="20" fill="none" stroke="#000"/><path d="M3 17L17 3M3 17.500H10M6 4V8H9M12 18V14H17V18M6 14L10 18" fill="none" stroke="#000"/></svg></button>
            <button class="on" aria-label="Grid"><svg viewBox="0 0 21 21"><rect x=".5" y=".5" width="20" height="20" fill="none" stroke="#000"/><path d="M4 17.500V7L8 3.500H17.500V17.500ZM11 3.500V17.500M4 10.500H17" fill="none" stroke="#000"/></svg></button>
            <label for="xy">X Y :</label>
            <span class="entry"><input id="xy" type="text"></span>
            <button class="on" aria-label="Message"><svg viewBox="0 0 21 21"><rect x=".5" y=".5" width="20" height="20" fill="none" stroke="#000"/><path d="M10.500 3V14M10.500 16V18" stroke="#000" stroke-width="1.500"/></svg></button>
            <div class="msg">&lt;M1&gt; - Select first corner</div>
            <div class="unit"><select aria-label="Units"><option>Inch</option></select></div>
          </div>
          <div class="cmd"><input type="text" aria-label="Command line"></div>
        </div>
      </div>
      <footer class="taskbar">
        <button class="orb" aria-label="Start"><svg viewBox="0 0 36 36">
          <circle cx="18" cy="18" r="17" fill="#27567e" stroke="#8ab8d8"/><ellipse cx="18" cy="10" rx="13" ry="8" fill="#7aa8c8"/>
          <path d="M10 11Q14 8 17 11L15 18Q12 15 8 18Z" fill="#f0602c"/><path d="M19 12Q23 14 27 11L25 18Q21 21 17 19Z" fill="#9ccc3c"/>
          <path d="M8 20Q12 17 15 20L13 27Q10 24 6 27Z" fill="#58b0ec"/><path d="M17 21Q21 23 25 20L23 27Q19 30 15 28Z" fill="#fcd03c"/></svg></button>
        <div class="start"><span class="ql">${icon("ie")}</span><span class="ql">${icon("explorer")}</span></div>
        ${this.task("fox", "Foxmail")}${this.task("floppy", "Admini...", "on")}${this.task("calc", "计算器")}
        <span class="ql">${icon("viewer")}</span><span class="ql">${icon("music")}</span><span class="ql">${icon("iqiyi")}</span>
        ${this.task("star", "兴森快...")}${this.task("list", "制作规...")}${this.task("eds", "EDS工...")}${this.task("genesis", "Genesis")}
        ${this.task("xwin", "Engine...", "joined")}${this.task("xwin", "Progress", "joined")}${this.task("xwin", "Graphi...", "joined")}${this.task("xwin", "Drill To...", "joined")}${this.task("xwin", "Job Ma...", "joined")}${this.task("xwin", "Graphi...")}
        ${this.task("xls", "4S7MD...", "joined")}${this.task("xls", "4s7md...")}${this.task("rtf", "201309...")}
        <div class="tray">${["keyboard", "help", "restore", "tri", "bird", "flag", "lan", "sound"].map((i) => icon(i))}<time class="wide">1:47</time><button class="peek" aria-label="Show desktop"></button></div>
      </footer>
    </div>`;
  }
}
